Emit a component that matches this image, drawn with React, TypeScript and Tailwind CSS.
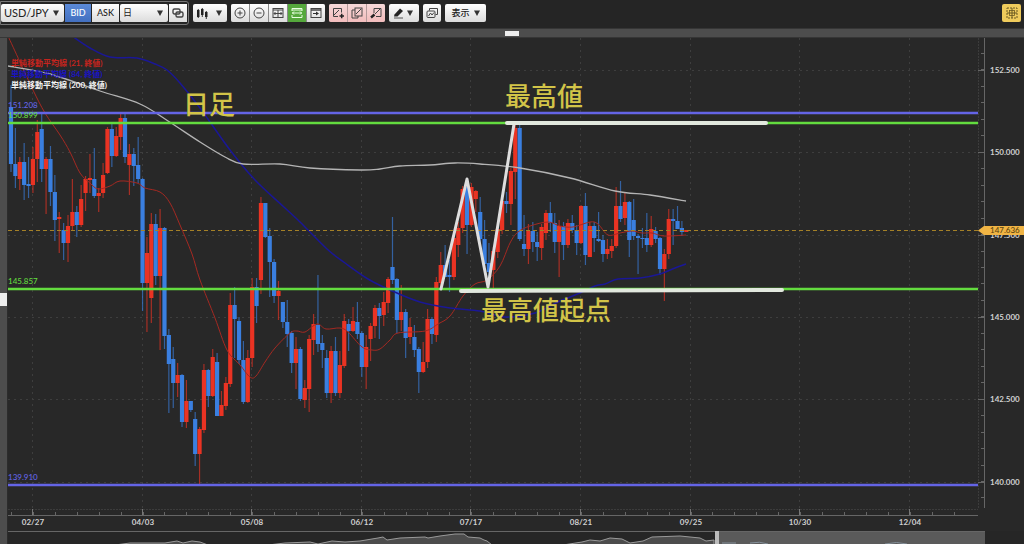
import type { ReactNode } from "react";

type Candle = [up: 0 | 1, top: number, bottom: number, high: number, low: number];

const FIRST_X = 11;
const STEP = 4.385;

const candles: Candle[] = [
  [0, 107, 164, 85, 172], [0, 164, 176, 128, 188], [1, 162, 179, 157, 190], [0, 162, 185, 143, 200],
  [0, 184, 186, 157, 198], [1, 159, 185, 147, 193], [1, 132, 159, 120, 182], [0, 129, 169, 113, 182],
  [1, 159, 169, 157, 214], [0, 159, 192, 146, 206], [0, 192, 220, 175, 241], [1, 217, 219, 212, 253],
  [0, 230, 243, 223, 260], [1, 226, 243, 215, 262], [1, 212, 226, 179, 230], [0, 212, 225, 206, 237],
  [1, 199, 225, 185, 227], [1, 179, 193, 176, 211], [1, 178, 180, 154, 193], [0, 179, 196, 148, 198],
  [1, 193, 196, 188, 212], [1, 175, 193, 163, 198], [1, 129, 173, 127, 174], [0, 129, 156, 122, 167],
  [1, 136, 156, 127, 157], [1, 118, 137, 113, 150], [0, 118, 157, 113, 163], [1, 154, 165, 144, 195],
  [0, 154, 166, 148, 186], [0, 165, 179, 137, 183], [0, 179, 283, 178, 311], [1, 253, 283, 237, 332],
  [1, 224, 298, 213, 323], [0, 224, 276, 214, 285], [1, 228, 276, 209, 350], [0, 228, 336, 227, 349],
  [0, 335, 364, 329, 413], [0, 359, 383, 347, 408], [1, 375, 383, 363, 397], [0, 375, 422, 374, 427],
  [1, 401, 422, 380, 428], [0, 401, 410, 401, 412], [0, 419, 454, 412, 466], [1, 429, 454, 427, 484],
  [1, 370, 430, 364, 433], [0, 370, 396, 369, 407], [1, 357, 396, 349, 397], [0, 362, 416, 353, 416],
  [1, 405, 416, 391, 416], [1, 383, 406, 377, 410], [1, 305, 384, 293, 387], [0, 305, 319, 287, 358],
  [0, 321, 360, 317, 364], [0, 360, 402, 341, 404], [1, 358, 402, 350, 403], [1, 287, 358, 278, 367],
  [0, 287, 306, 278, 323], [1, 203, 280, 197, 294], [0, 203, 237, 203, 238], [0, 236, 262, 228, 297],
  [0, 262, 296, 259, 303], [1, 291, 296, 281, 320], [0, 302, 322, 302, 328], [0, 322, 334, 300, 347],
  [0, 333, 363, 331, 373], [1, 349, 363, 337, 389], [0, 349, 399, 347, 401], [1, 388, 400, 380, 408],
  [1, 339, 389, 335, 412], [1, 324, 340, 314, 355], [0, 325, 344, 275, 352], [0, 343, 350, 335, 368],
  [0, 358, 393, 350, 398], [1, 351, 393, 346, 403], [0, 351, 393, 337, 396], [1, 365, 393, 351, 398],
  [1, 321, 366, 314, 368], [0, 324, 331, 319, 351], [1, 321, 331, 307, 332], [0, 322, 334, 302, 339],
  [0, 333, 367, 331, 377], [1, 347, 367, 335, 389], [1, 326, 339, 323, 361], [1, 308, 326, 305, 338],
  [0, 308, 316, 303, 339], [1, 302, 315, 292, 326], [1, 279, 303, 277, 313], [0, 267, 280, 217, 284],
  [0, 279, 320, 278, 333], [1, 312, 320, 285, 331], [0, 312, 338, 309, 358], [1, 327, 337, 318, 344],
  [0, 337, 350, 325, 357], [0, 349, 372, 347, 393], [1, 362, 372, 342, 373], [1, 319, 362, 309, 368],
  [0, 319, 334, 317, 344], [1, 282, 335, 277, 342], [1, 265, 283, 252, 288], [0, 265, 277, 245, 277],
  [0, 275, 277, 260, 292], [1, 238, 277, 233, 280], [1, 228, 245, 222, 257], [1, 189, 228, 186, 233],
  [0, 187, 225, 183, 254], [1, 187, 225, 183, 227], [1, 191, 199, 190, 212], [0, 212, 239, 197, 243],
  [0, 239, 264, 220, 267], [0, 263, 272, 243, 277], [1, 251, 270, 247, 288], [1, 229, 252, 227, 258],
  [1, 201, 230, 200, 234], [0, 201, 204, 192, 213], [1, 171, 204, 168, 225], [1, 128, 172, 125, 199],
  [0, 128, 239, 125, 241], [0, 244, 249, 215, 256], [1, 231, 249, 224, 264], [0, 231, 242, 222, 252],
  [0, 242, 247, 232, 261], [1, 227, 248, 224, 260], [1, 213, 233, 210, 240], [0, 213, 223, 202, 232],
  [0, 223, 242, 213, 253], [1, 226, 242, 220, 277], [0, 226, 245, 222, 260], [1, 223, 245, 219, 248],
  [0, 223, 230, 215, 233], [0, 230, 243, 225, 255], [1, 206, 243, 205, 244], [0, 206, 255, 193, 265],
  [1, 226, 257, 222, 257], [0, 226, 238, 222, 252], [0, 239, 241, 212, 242], [0, 240, 254, 235, 262],
  [1, 249, 254, 239, 259], [1, 246, 251, 239, 258], [1, 206, 246, 187, 248], [0, 206, 219, 181, 222],
  [1, 202, 218, 192, 225], [0, 202, 240, 201, 257], [0, 220, 236, 199, 240], [0, 236, 238, 234, 274],
  [0, 238, 239, 228, 248], [0, 238, 245, 213, 252], [1, 229, 245, 216, 247], [0, 231, 239, 227, 243],
  [0, 238, 269, 237, 275], [1, 254, 269, 249, 301], [1, 219, 254, 209, 259], [0, 219, 221, 209, 245],
  [0, 221, 229, 206, 229], [0, 228, 232, 221, 236], [1, 230, 232, 230, 232],
];

const sma21 =
  "8,36 20,62 33,90 45,113 60,135 70,152 80,173 90,183 98,189 110,186 120,181 137,183 145,188 160,192 170,203 180,225 192,254 200,280 215,318 227,350 240,365 250,377 256,376 265,362 275,348 290,333 297,331 305,332 317,324 326,329 340,328 348,332 362,347 372,350 380,349 390,340 398,333 425,331 438,324 450,316 463,296 475,284 487,280 500,266 510,243 518,232 530,226 548,222 560,226 573,227 590,222 598,224 608,235 620,233 632,231 642,233 652,233 664,236 686,235";
const sma84 =
  "72,36 90,48 110,57 137,58 155,64 167,70 180,83 200,108 230,150 255,180 285,208 300,222 327,249 345,263 368,279 390,290 420,302 450,308 480,311 505,317 535,313 560,301 580,293 595,286 605,284 618,279 640,278 660,274 675,268 686,264";
const sma200 =
  "8,66 50,74 100,91 140,104 168,121 200,142 225,157 243,164 280,164 310,168 360,170 380,169 400,166 430,165 455,163 480,164 520,168 570,178 615,191 650,195 686,201";

// Catmull-Rom through the points
function curve(points: string) {
  const p = points.split(" ").map((s) => s.split(",").map(Number));
  let d = `M${p[0][0]} ${p[0][1]}`;
  for (let i = 0; i < p.length - 1; i++) {
    const a = p[i - 1] ?? p[i];
    const b = p[i];
    const c = p[i + 1];
    const e = p[i + 2] ?? c;
    d += `C${b[0] + (c[0] - a[0]) / 6} ${b[1] + (c[1] - a[1]) / 6} ${c[0] - (e[0] - b[0]) / 6} ${c[1] - (e[1] - b[1]) / 6} ${c[0]} ${c[1]}`;
  }
  return d;
}

const dates = ["02/27", "04/03", "05/08", "06/12", "07/17", "08/21", "09/25", "10/30", "12/04"];
const prices = ["152.500", "150.000", "147.500", "145.000", "142.500", "140.000"];

const dateX = (i: number) => Math.round(33 + i * 109.6);
const priceY = (i: number) => Math.round(70 + i * 82.3);

const levels = [
  { y: 113, label: "151.208", labelY: 108, color: "#6464e6" },
  { y: 123, label: "150.899", labelY: 118, color: "#63dc3f" },
  { y: 289, label: "145.857", labelY: 284, color: "#63dc3f" },
  { y: 485, label: "139.910", labelY: 480, color: "#6464e6" },
];

const legend = [
  { text: "単純移動平均線 (21, 終値)", color: "#c4241e" },
  { text: "単純移動平均線 (84, 終値)", color: "#1a14c0" },
  { text: "単純移動平均線 (200, 終値)", color: "#f2f2f2" },
];

const notes = [
  { text: "日足", x: 183, y: 114 },
  { text: "最高値", x: 505, y: 106 },
  { text: "最高値起点", x: 481, y: 320 },
];

const face = "bg-linear-to-b from-white to-[#dcdcdc] text-[#222]";

function Caret() {
  return (
    <svg viewBox="0 0 6 6" className="pointer-events-none h-[6px] w-[6px] shrink-0">
      <path d="M0 0.5h6L3 6z" fill="#333" />
    </svg>
  );
}

function Picker({ label, value, className }: { label: string; value: string; className: string }) {
  return (
    <label className={`relative flex h-[18px] items-center rounded-[2px] ${face} ${className}`}>
      <select aria-label={label} className="h-full w-full appearance-none bg-transparent pl-[3px] leading-[18px] outline-none">
        <option>{value}</option>
      </select>
      <span className="pointer-events-none absolute right-[5px]">
        <Caret />
      </span>
    </label>
  );
}

function Tool({ label, className = face, children }: { label: string; className?: string; children: ReactNode }) {
  return (
    <button type="button" aria-label={label} className={`flex h-[18px] w-[18px] items-center justify-center ${className}`}>
      {children}
    </button>
  );
}

function Icon({ children, color = "#444" }: { children: ReactNode; color?: string }) {
  return (
    <svg viewBox="0 0 12 12" className="h-3 w-3" fill="none" stroke={color} strokeWidth="1">
      {children}
    </svg>
  );
}

function Toolbar() {
  const pink = "bg-linear-to-b from-[#f6d9d9] to-[#f2bcbc]";
  return (
    <header className="flex h-7 items-start gap-1 bg-[#252525] pr-[3px]">
      <div className="mt-px flex gap-px rounded-r-[3px] border border-[#777] py-[2px] pr-px">
        <Picker label="通貨ペア" value="USD/JPY" className="w-[63px] text-[11px]" />
        <button type="button" className="h-[18px] w-[26px] bg-linear-to-b from-[#5b8ad8] to-[#426fc0] text-[9px] font-medium text-white">
          BID
        </button>
        <button type="button" className={`h-[18px] w-[27px] text-[9px] font-medium ${face}`}>ASK</button>
        <Picker label="足種" value="日" className="w-[48px] text-[9px]" />
        <Tool label="連動">
          <Icon>
            <rect x="1" y="2" width="7" height="5" rx="1.5" strokeWidth="1.4" />
            <rect x="4" y="5" width="7" height="5" rx="1.5" strokeWidth="1.4" />
          </Icon>
        </Tool>
      </div>

      <div className="flex flex-1 gap-1 pt-[4px]">
        <button type="button" aria-label="チャート種類" className={`flex h-[18px] w-[34px] items-center justify-between rounded-[2px] pr-[5px] pl-[3px] ${face}`}>
          <svg viewBox="0 0 12 12" className="h-3 w-3" fill="#222">
            <path d="M1 3h2.500v7H1zM5 2h2.500v6H5zM9 5h2.500v5H9zM1.800 2h.9v9h-.9zM5.800 1h.9v9h-.9zM9.800 4h.9v8h-.9z" />
          </svg>
          <Caret />
        </button>

        <div className="flex gap-px overflow-hidden rounded-[2px] bg-[#8a8a8a]">
          <Tool label="拡大">
            <Icon>
              <circle cx="6" cy="6" r="5" />
              <path d="M3.5 6h5M6 3.5v5" />
            </Icon>
          </Tool>
          <Tool label="縮小">
            <Icon>
              <circle cx="6" cy="6" r="5" />
              <path d="M3.5 6h5" />
            </Icon>
          </Tool>
          <Tool label="全体表示">
            <Icon>
              <rect x="1" y="1.5" width="10" height="9" />
              <path d="M1 3h10M6 3v7M2 6.5h8M3.5 5L2 6.5 3.5 8M8.5 5L10 6.5 8.5 8" />
            </Icon>
          </Tool>
          <Tool label="幅調整" className="bg-[#55a83c]">
            <Icon color="#e8ffe0">
              <path d="M1 4V1.5h10V4M1 8v2.500h10V8M1 6h10M3 4.500L1.500 6 3 7.500M9 4.500L10.500 6 9 7.500M1 3h10" />
            </Icon>
          </Tool>
          <Tool label="最新へ">
            <Icon>
              <rect x="1" y="1.5" width="10" height="9" />
              <path d="M1 3h10" strokeWidth="1.400" />
              <path d="M3 6h3V4.500L9 6.500 6 8.500V7H3z" fill="#333" stroke="none" />
            </Icon>
          </Tool>
        </div>

        <div className="flex gap-px overflow-hidden rounded-[2px] bg-[#b49a9a]">
          <Tool label="描画を追加" className={pink}>
            <Icon>
              <path d="M9.500 5.500V1.500h-8v8H6M2 8l5-5" />
              <path d="M7.500 9h4.500M9.700 6.800v4.500" strokeWidth="1.500" stroke="#222" />
            </Icon>
          </Tool>
          <Tool label="描画を複製" className={pink}>
            <Icon>
              <rect x="4" y="1" width="7" height="8" />
              <path d="M4 3H1v8h6V9M5 7l5-5" />
            </Icon>
          </Tool>
          <Tool label="描画を消去" className={pink}>
            <Icon>
              <path d="M4 6V1.500h7V9.500H6M5 7l5-5" />
              <path d="M1 10.500L4.500 7.500" strokeWidth="2.400" stroke="#222" />
            </Icon>
          </Tool>
        </div>

        <button type="button" aria-label="描画" className={`flex h-[18px] w-[30px] items-center justify-between rounded-[2px] pr-[6px] pl-[4px] ${face}`}>
          <svg viewBox="0 0 12 12" className="h-3 w-3">
            <path d="M1.500 7.500L7 1.500l3 2.500L4.500 9.500H1z" fill="#222" />
            <path d="M1 11h9" stroke="#555" />
          </svg>
          <Caret />
        </button>

        <Tool label="保存" className={`rounded-[2px] ${face}`}>
          <Icon>
            <path d="M3.500 3.500V1.500h8v6h-2" />
            <rect x="1" y="4" width="8" height="6.500" rx="1" />
            <path d="M2.500 9l2-3 1.500 2L8 5.500" />
          </Icon>
        </Tool>

        <button type="button" className={`flex h-[18px] w-[41px] items-center justify-center gap-1 rounded-[2px] text-[9px] font-medium ${face}`}>
          表示
          <Caret />
        </button>

        <button type="button" aria-label="レイアウト" className="ml-auto flex h-[18px] w-[19px] items-center justify-center rounded-[2px] bg-[#efcb5c]">
          <Icon color="#6b5a22">
            <rect x="1" y="1" width="10" height="10" strokeDasharray="2 1" />
            <path d="M6 1v10M1 6h10" />
            <rect x="3.500" y="3.500" width="5" height="5" strokeWidth="0.800" />
          </Icon>
        </button>
      </div>
    </header>
  );
}

function Chart() {
  return (
    <svg viewBox="8 38 1016 493" className="block h-auto w-full bg-[#282828]" role="img" aria-label="USD/JPY 日足">
      {/* grid */}
      <g stroke="#3e3e3e" strokeDasharray="2 4">
        {prices.map((p, i) => (
          <path key={p} d={`M8 ${priceY(i) + 0.5}H978`} />
        ))}
        {dates.map((d, i) => (
          <path key={d} d={`M${dateX(i) - 0.5} 38V509`} />
        ))}
        <path d="M8 509.500H978M978.500 38V509" strokeDasharray="2 1" stroke="#3c3c3c" />
      </g>

      {/* candles */}
      {candles.map(([up, top, bottom, high, low], i) => {
        const x = FIRST_X + i * STEP;
        return (
          <g key={i} fill={up ? "#ea3323" : "#3a7fe0"}>
            <rect x={x - 0.6} y={high} width="1.200" height={low - high} opacity="0.650" />
            <rect x={x - 2.1} y={top} width="4.200" height={bottom - top} />
          </g>
        );
      })}

      {/* moving averages */}
      <g fill="none">
        <path d={curve(sma21)} stroke="#a52822" />
        <path d={curve(sma84)} stroke="#1a1796" strokeWidth="1.500" />
        <path d={curve(sma200)} stroke="#b4b4b4" strokeWidth="1.300" />
      </g>

      <path d="M8 230.500H978" stroke="#a58127" strokeDasharray="4 3" />

      {levels.map((l) => (
        <path key={l.label} d={`M8 ${l.y}H978`} stroke={l.color} strokeWidth="2.400" />
      ))}
      {levels.map((l) => (
        <text key={l.label} x="8" y={l.labelY} fill={l.color} className="text-[8px] font-medium">
          {l.label}
        </text>
      ))}

      {legend.map((l, i) => (
        <text key={l.text} x="11" y={66 + i * 11} fill={l.color} className="text-[8px] font-bold">
          {l.text}
        </text>
      ))}

      {/* hand-drawn marks */}
      <g fill="none" stroke="#dedede" strokeLinecap="round" strokeLinejoin="round">
        <path d="M441 289L467 179L488 287L514 124" strokeWidth="3" />
        <path d="M507 123L766 123M461 291L782 290" strokeWidth="4" stroke="#e2e8de" />
      </g>
      {notes.map((n) => (
        <text key={n.text} x={n.x} y={n.y} fill="#d2c448" className="text-[26px] font-medium">
          {n.text}
        </text>
      ))}

      {/* price axis */}
      <path d="M984.500 38V508" stroke="#666" />
      {Array.from({ length: 28 }, (_, i) => (
        <path key={i} d={`M981 ${Math.round(53 + i * 16.46) + 0.5}h3`} stroke="#666" />
      ))}
      {prices.map((p, i) => (
        <g key={p}>
          <path d={`M978 ${priceY(i) + 0.5}h6`} stroke="#666" />
          <text x="990" y={priceY(i) + 3} fill="#d0d0d0" className="text-[8px] font-bold">
            {p}
          </text>
        </g>
      ))}
      <path d="M978 230.500L984 226H1024V235H984Z" fill="#f0b444" />
      <text x="990" y="233" fill="#5a430f" className="text-[8px] font-medium">
        147.636
      </text>

      {/* date axis */}
      <path d="M8 515.500H978" stroke="#666" />
      {Array.from({ length: 44 }, (_, i) => (
        <path key={i} d={`M${Math.round(11 + i * 21.92) + 0.5} 512v3`} stroke="#666" />
      ))}
      {dates.map((d, i) => (
        <g key={d}>
          <path d={`M${dateX(i) - 0.5} 509v6`} stroke="#777" />
          <text x={dateX(i)} y="525" textAnchor="middle" fill="#d0d0d0" className="text-[8px] font-bold">
            {d}
          </text>
        </g>
      ))}
    </svg>
  );
}

function Navigator() {
  return (
    <svg viewBox="8 531 1016 13" className="block h-auto w-full bg-[#262626]" aria-hidden="true">
      <path d="M8 531.500H985" stroke="#666" />
      <rect x="719" y="532" width="266" height="12" fill="#5a5a5a" />
      <path
        d="M115 545L130 543L165 543L177 541L183 543L192 541L200 542L208 545M268 545L285 543L310 542L318 544L332 541L345 542L360 541L378 538L383 537L387 540L400 538L425 537L428 538L440 536L455 534L464 534L468 537L480 538L484 540L487 541L492 545M563 545L582 542L590 540L600 541L610 538L622 539L630 543L643 541L652 537L680 536L700 538L706 541L714 540V545"
        fill="#4c4c4c"
        stroke="#9a9a9a"
      />
      <path d="M722 543h14M750 543q10 -2 18 1M885 544q12 -3 22 0" fill="none" stroke="#84909a" />
      <rect x="715" y="531" width="4" height="13" fill="#bcbcbc" />
    </svg>
  );
}

export default function App() {
  return (
    <div className="flex min-h-screen flex-col overflow-hidden bg-[#262626] font-[family-name:Lato,'Noto_Sans_CJK_JP',sans-serif]">
      <Toolbar />
      <div className="flex h-[10px] items-center justify-center border-y border-[#363636] bg-[#4d4d4d]">
        <div className="h-[5px] w-[14px] bg-[#ededed]" />
      </div>
      <main className="flex flex-1">
        <div className="flex w-2 shrink-0 items-center border-r border-[#2c2c2c] bg-[#4d4d4d] pt-4">
          <div className="h-[13px] w-[7px] bg-[#ededed]" />
        </div>
        <div className="min-w-0 flex-1">
          <Chart />
          <Navigator />
        </div>
      </main>
    </div>
  );
}
